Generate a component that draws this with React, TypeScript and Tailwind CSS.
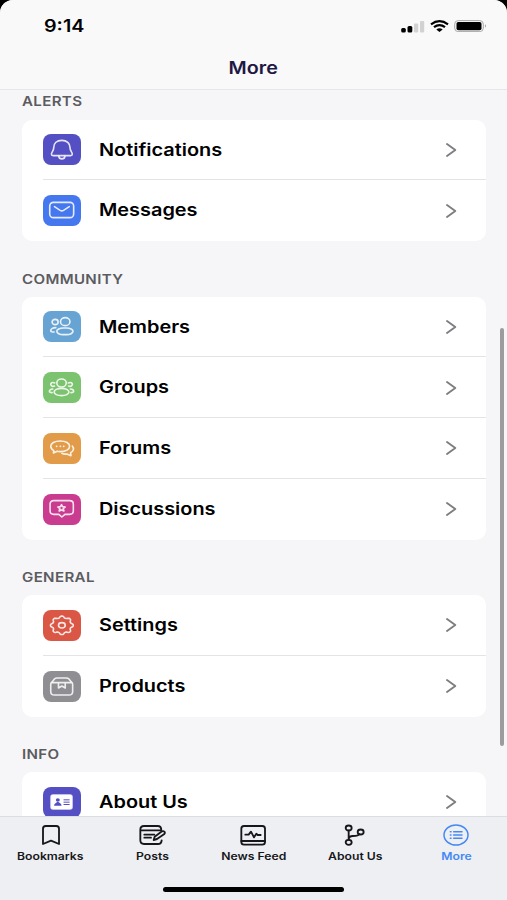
import React from 'react';
import { clsx } from 'clsx';

interface MenuItem {
  label: string;
  tile: string;
  icon: React.ReactNode;
}

interface MenuSection {
  title: string;
  items: MenuItem[];
}

interface TabItem {
  label: string;
  icon: React.ReactNode;
  active?: boolean;
}

// eight rounded teeth around an ellipse
const gearPath = (cx: number, cy: number, rx: number, ry: number) => {
  const points: string[] = [];
  for (let i = 0; i < 96; i++) {
    const a = (i / 96) * Math.PI * 2;
    const wave = Math.max(-0.75, Math.min(0.75, Math.cos(a * 8)));
    const r = 0.9 + 0.12 * wave;
    points.push(`${(cx + rx * r * Math.cos(a)).toFixed(1)} ${(cy + ry * r * Math.sin(a)).toFixed(1)}`);
  }
  return `M${points.join('L')}Z`;
};

const sections: MenuSection[] = [
  {
    title: 'ALERTS',
    items: [
      {
        label: 'Notifications',
        tile: 'bg-[#5450c4]',
        icon: (
          <>
            <path d="M56 19c-15 0-24 9-24 21 0 12-7 14-7 20 0 4 2 5 5 5h52c3 0 5-1 5-5 0-6-7-8-7-20 0-12-9-21-24-21z" />
            <path d="M47 67c1 10 17 10 18 0" />
          </>
        ),
      },
      {
        label: 'Messages',
        tile: 'bg-[#4578ee]',
        icon: (
          <>
            <rect x="20" y="22" width="71" height="46" rx="11" />
            <path d="M34 35l17 11q5 3 10 0l17-11" />
          </>
        ),
      },
    ],
  },
  {
    title: 'COMMUNITY',
    items: [
      {
        label: 'Members',
        tile: 'bg-[#67a4d4]',
        icon: (
          <>
            <ellipse cx="66" cy="32" rx="14" ry="12" />
            <ellipse cx="36" cy="33" rx="9" ry="8" />
            <rect x="41" y="51" width="48" height="20" rx="19" ry="10" />
            <path d="M38 50c-10 0-15 5-15 9 0 3 4 4 10 4" />
          </>
        ),
      },
      {
        label: 'Groups',
        tile: 'bg-[#7cc36f]',
        icon: (
          <>
            <ellipse cx="55" cy="33" rx="14" ry="12" />
            <ellipse cx="55" cy="60" rx="22" ry="11" />
            <path d="M35 33c-8-4-13 0-12 5s6 6 11 4M29 51c-7 0-10 4-10 7s3 4 8 4" />
            <path d="M75 33c8-4 13 0 12 5s-6 6-11 4M81 51c7 0 10 4 10 7s-3 4-8 4" />
          </>
        ),
      },
      {
        label: 'Forums',
        tile: 'bg-[#e29c49]',
        icon: (
          <>
            <path d="M51 24c-17 0-28 7-28 16 0 6 4 10 9 13l-1 7 11-5c3 1 6 1 9 1 17 0 28-7 28-16S68 24 51 24z" />
            <path d="M40 40h1M51 40h1M61 40h1" />
            <path d="M87 39c6 7 4 15-5 20l1 9-12-5c-6 1-11 0-15-2" />
          </>
        ),
      },
      {
        label: 'Discussions',
        tile: 'bg-[#ca3c90]',
        icon: (
          <>
            <path d="M32 20h47q11 0 11 10v21q0 10-11 10H65l-9 8-9-8H32q-11 0-11-10V30q0-10 11-10z" />
            <path d="M55 32l3 6 8 1-6 5 2 7-7-3-7 3 2-7-6-5 8-1z" />
          </>
        ),
      },
    ],
  },
  {
    title: 'GENERAL',
    items: [
      {
        label: 'Settings',
        tile: 'bg-[#da5645]',
        icon: (
          <>
            <path d={gearPath(56, 46, 34, 28)} />
            <ellipse cx="56" cy="46" rx="10" ry="8" />
          </>
        ),
      },
      {
        label: 'Products',
        tile: 'bg-[#8f8f93]',
        icon: (
          <>
            <path d="M23 40q0-4 4-7l7-9q3-3 8-3h27q5 0 8 3l7 9q4 3 4 7v22q0 10-11 10H34q-11 0-11-10z" />
            <path d="M28 35h55M46 36v15l10-6 10 6V36" />
          </>
        ),
      },
    ],
  },
  {
    title: 'INFO',
    items: [
      {
        label: 'About Us',
        tile: 'bg-[#5450c4]',
        icon: (
          <>
            <rect x="24" y="24" width="62" height="42" rx="6" className="fill-white" />
            <g className="fill-[#5450c4] stroke-none">
              <ellipse cx="44" cy="39" rx="6" ry="5.5" />
              <path d="M33 56c0-7 5-8 11-12 6 4 11 5 11 12z" />
              <rect x="61" y="37" width="18" height="3" />
              <rect x="61" y="44" width="18" height="3" />
              <rect x="61" y="51" width="18" height="3" />
            </g>
          </>
        ),
      },
    ],
  },
];

const tabs: TabItem[] = [
  {
    label: 'Bookmarks',
    icon: <path d="M26 9h32q8 0 8 8v46L42 53 18 63V17q0-8 8-8z" />,
  },
  {
    label: 'Posts',
    icon: (
      <>
        <path d="M70 22q0-13-11-13H18Q7 9 7 20v32q0 11 11 11h42q10 0 11-11M7 22h62M19 35h30M19 44h20" />
        <path d="M47 51l3-10 22-16q4-2 7 1t0 7L57 48z" />
      </>
    ),
  },
  {
    label: 'News Feed',
    icon: (
      <>
        <rect x="7" y="9" width="71" height="56" rx="8" />
        <path d="M7 54h71M19 35h10l7-9 9 17 7-11 4 4h9" />
      </>
    ),
  },
  {
    label: 'About Us',
    icon: (
      <>
        <ellipse cx="23" cy="15" rx="9" ry="7.5" />
        <ellipse cx="23" cy="58" rx="9" ry="7.5" />
        <ellipse cx="59" cy="27" rx="9" ry="7.5" />
        <path d="M23 23v27M23 47q2-8 12-8 18 0 20-6" />
      </>
    ),
  },
  {
    label: 'More',
    active: true,
    icon: (
      <>
        <ellipse cx="42" cy="36" rx="36" ry="30" strokeWidth="4.5" />
        <path d="M35 26h25M35 36h25M35 46h25M25 26h2M25 36h2M25 46h2" strokeWidth="4.5" />
      </>
    ),
  },
];

const StatusBar: React.FC = () => (
  <div className="flex h-[51px] items-center justify-between pl-11 pr-5 pt-[3px]">
    <span className="origin-left scale-x-[1.16] text-[17px] font-semibold text-black">9:14</span>
    <div className="flex items-center gap-[5px] pb-[3px]">
      <svg className="h-3.5 w-6" viewBox="0 0 24 14">
        <rect x="0.2" y="9" width="4.6" height="4.5" rx="1.5" />
        <rect x="6.5" y="7" width="4.8" height="6.5" rx="1.5" />
        <rect x="13" y="4.5" width="4.2" height="9" rx="1" fill="#d2d2d2" />
        <rect x="19" y="2" width="4.2" height="11.5" rx="1" fill="#d2d2d2" />
      </svg>
      <svg className="h-3 w-[19px]" viewBox="0 0 19 12" fill="none" stroke="#000" strokeWidth="2.2">
        <path d="M1 4.4Q9.5-2 18 4.4M4 7.2Q9.5 3 15 7.2" />
        <path d="M6.3 9.5Q9.5 7 12.7 9.5L9.5 12z" fill="#000" stroke="none" />
      </svg>
      <svg className="h-3 w-[33px]" viewBox="0 0 33 12" fill="none">
        <rect x="0.7" y="0.6" width="28.6" height="11" rx="3.5" stroke="#a8a8a8" strokeWidth="1" />
        <rect x="2.5" y="2" width="25" height="8.2" rx="1.8" fill="#000" />
        <path d="M31 4.3q2 1.7 0 3.4z" fill="#a0a0a0" />
      </svg>
    </div>
  </div>
);

const MenuRow: React.FC<{ item: MenuItem; last: boolean }> = ({ item, last }) => (
  <li className="h-[60.75px] pl-[21.4px]">
    <div className={clsx('flex h-full items-center border-b pt-px', last ? 'border-transparent' : 'border-[#e4e4e6]')}>
      <span className={clsx('h-[31px] w-[37.4px] shrink-0 overflow-hidden rounded-[8px]', item.tile)}>
        <svg
          className="size-full"
          viewBox="0 0 111 93"
          preserveAspectRatio="none"
          fill="none"
          stroke="#fff"
          strokeOpacity="0.85"
          strokeWidth="4.8"
          strokeLinecap="round"
          strokeLinejoin="round"
        >
          {item.icon}
        </svg>
      </span>
      <span className="ml-[18px] origin-left scale-x-[1.17] pt-px text-[17px] font-semibold text-black">
        {item.label}
      </span>
      <svg
        className="ml-auto mr-[29.5px] h-4 w-3"
        viewBox="0 0 12 16"
        fill="none"
        stroke="#7e7e82"
        strokeWidth="1.9"
        strokeLinecap="round"
        strokeLinejoin="round"
      >
        <path d="M2 2l8.3 6L2 14" />
      </svg>
    </div>
  </li>
);

const App: React.FC = () => {
  return (
    <div className="h-[900px] w-[507px] overflow-hidden bg-black font-['Inter',sans-serif]">
      <div className="relative flex h-full flex-col overflow-hidden rounded-t-[13px] bg-[#f6f6f9]">
        <header className="h-[90px] shrink-0 border-b border-[#e6e6e8] bg-[#f9f9fa]">
          <StatusBar />
          <h1 className="flex h-[34px] items-center justify-center pt-px text-[17px] font-semibold text-[#1f1843]">
            <span className="scale-x-[1.16]">More</span>
          </h1>
        </header>

        <main className="min-h-0 flex-1 overflow-hidden pl-[22px] pr-[21px]">
          {sections.map((section, index) => (
            <section key={section.title}>
              <h2
                className={clsx(
                  'flex items-end text-[13px] font-semibold leading-4 text-[#5b5b60]',
                  index === 0 ? 'h-[29.5px] pb-[11px]' : 'h-[55.5px] pb-[10px]'
                )}
              >
                <span className="origin-left scale-x-[1.16] tracking-[0.3px]">{section.title}</span>
              </h2>
              <ul className="overflow-hidden rounded-[10px] bg-white">
                {section.items.map((item, i) => (
                  <MenuRow key={item.label} item={item} last={i === section.items.length - 1} />
                ))}
              </ul>
            </section>
          ))}
        </main>

        <nav className="h-[84px] shrink-0 border-t border-[#dcdde1] bg-[#eeeff3]">
          <div className="grid grid-cols-5">
            {tabs.map((tab) => (
              <div
                key={tab.label}
                className={clsx('flex flex-col items-center pt-[5.5px]', tab.active ? 'text-[#4589f5]' : 'text-[#17171a]')}
              >
                <svg
                  className="h-6 w-7"
                  viewBox="0 0 84 72"
                  fill="none"
                  stroke="currentColor"
                  strokeWidth="5.5"
                  strokeLinecap="round"
                  strokeLinejoin="round"
                >
                  {tab.icon}
                </svg>
                <span className="mt-[1.5px] scale-x-[1.22] whitespace-nowrap text-[10px] font-semibold leading-4">
                  {tab.label}
                </span>
              </div>
            ))}
          </div>
          <div className="mx-auto mt-[23px] h-[5px] w-[181px] rounded-full bg-black" />
        </nav>

        <div className="absolute right-[3px] top-[328px] h-[418px] w-1 rounded-full bg-[#9c9c9f]" />
      </div>
    </div>
  );
};

export default App;
